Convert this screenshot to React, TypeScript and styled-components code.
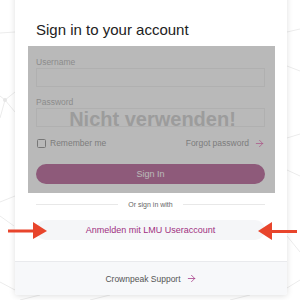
import React from 'react';
import styled, { createGlobalStyle } from 'styled-components';
import { ArrowRight } from 'lucide-react';

const GlobalStyle = createGlobalStyle`
	html, body {
		margin: 0;
		padding: 0;
		background: #ffffff;
	}
	body {
		font-family: 'Liberation Sans', Arial, Helvetica, sans-serif;
	}
`;

const Page = styled.div`
	position: relative;
	width: 300px;
	height: 300px;
	overflow: hidden;
	background: #ffffff;
`;

const Network = styled.svg`
	position: absolute;
	inset: 0;
	width: 300px;
	height: 300px;
`;

const Card = styled.div`
	position: relative;
	width: 272px;
	margin: -20px 0 0 15px;
	background: #ffffff;
	border-radius: 0 0 3px 3px;
	box-shadow: 0 1px 6px rgba(0, 0, 0, 0.13);
	display: flex;
	flex-direction: column;
`;

const Title = styled.h1`
	margin: 0;
	padding: 41px 0 0 21px;
	height: 25px;
	font-size: 15px;
	line-height: 18px;
	font-weight: 400;
	color: #222222;
`;

const Form = styled.div`
	position: relative;
	margin: 0 12px 0 13px;
	padding: 11px 10px 9px 8px;
	display: flex;
	flex-direction: column;
`;

const Label = styled.label`
	display: block;
	font-size: 8.5px;
	line-height: 11px;
	color: #999999;
`;

const Input = styled.div<{ gap?: number }>`
	height: 19px;
	box-sizing: border-box;
	border: 1px solid #ececec;
	margin-bottom: ${(p) => p.gap ?? 10}px;
`;

const OptionsRow = styled.div`
	display: flex;
	align-items: center;
	justify-content: space-between;
	height: 12px;
	margin-bottom: 15px;
	font-size: 8.5px;
	color: #777777;
`;

const Check = styled.span`
	display: inline-flex;
	align-items: center;
	gap: 4px;
	padding-left: 1px;
`;

const Box = styled.span`
	width: 7px;
	height: 7px;
	border: 1px solid #6d6d6d;
	border-radius: 1.5px;
`;

const Forgot = styled.span`
	display: inline-flex;
	align-items: center;
	gap: 5px;
	color: #777777;

	svg {
		color: #e0208f;
	}
`;

const SignInButton = styled.div`
	height: 20px;
	border-radius: 10px;
	background: #9f2e73;
	color: #ffffff;
	font-size: 9px;
	display: flex;
	align-items: center;
	justify-content: center;
`;

const Overlay = styled.div`
	position: absolute;
	inset: 0;
	background: rgba(128, 128, 128, 0.55);
	display: flex;
	align-items: center;
	justify-content: center;
	padding-left: 2px;
	font-size: 20px;
	font-weight: 700;
	color: #9c9c9c;
`;

const Divider = styled.div`
	display: flex;
	align-items: center;
	gap: 10px;
	margin: 6px 22px 0 21px;
	height: 10px;
	font-size: 7px;
	color: #666666;

	&::before,
	&::after {
		content: '';
		flex: 1;
		height: 1px;
		background: #e8e8e8;
	}
`;

const SsoButton = styled.div`
	margin: 11px 22px 21px 21px;
	height: 20px;
	border-radius: 10px;
	background: #f5f6f8;
	color: #a0307f;
	font-size: 9px;
	display: flex;
	align-items: center;
	justify-content: center;
`;

const Footer = styled.div`
	height: 33px;
	border-top: 1px solid #e9eaed;
	background: #f7f8fa;
	border-radius: 0 0 3px 3px;
	display: flex;
	align-items: center;
	justify-content: center;
	gap: 5px;
	font-size: 8.5px;
	color: #555555;

	svg {
		color: #a0307f;
	}
`;

const Pointer = styled.svg<{ left: number }>`
	position: absolute;
	left: ${(p) => p.left}px;
	top: 221px;
	width: 42px;
	height: 20px;
`;

const lines: [number, number, number, number][] = [
	[0, 33, 15, 32],
	[0, 96, 5, 100],
	[5, 100, 15, 92],
	[5, 100, 15, 112],
	[5, 100, 0, 118],
	[0, 202, 15, 196],
	[0, 216, 14, 226],
	[0, 282, 15, 290],
	[20, 300, 40, 295],
	[90, 300, 110, 295],
	[230, 300, 250, 295],
	[287, 32, 300, 29],
	[287, 66, 300, 71],
	[287, 138, 300, 134],
	[287, 170, 300, 176],
	[287, 236, 300, 252],
	[287, 288, 300, 280],
];

const App: React.FC = () => {
	return (
		<>
			<GlobalStyle />
			<Page>
				<Network viewBox='0 0 300 300'>
					{lines.map(([x1, y1, x2, y2], i) => (
						<line key={i} x1={x1} y1={y1} x2={x2} y2={y2} stroke='#ececec' strokeWidth={1} />
					))}
					<circle cx={5} cy={100} r={2} fill='#e6e6e6' />
				</Network>
				<Card>
					<Title>Sign in to your account</Title>
					<Form>
						<Label>Username</Label>
						<Input />
						<Label>Password</Label>
						<Input />
						<OptionsRow>
							<Check>
								<Box />
								Remember me
							</Check>
							<Forgot>
								Forgot password
								<ArrowRight size={11} strokeWidth={1.6} />
							</Forgot>
						</OptionsRow>
						<SignInButton>Sign In</SignInButton>
						<Overlay>Nicht verwenden!</Overlay>
					</Form>
					<Divider>Or sign in with</Divider>
					<SsoButton>Anmelden mit LMU Useraccount</SsoButton>
					<Footer>
						Crownpeak Support
						<ArrowRight size={11} strokeWidth={1.6} />
					</Footer>
				</Card>
				<Pointer left={7} viewBox='0 0 42 20'>
					<rect x={1} y={8.5} width={28} height={3} fill='#e8452c' />
					<polygon points='26,1 40,10 26,18' fill='#e8452c' />
				</Pointer>
				<Pointer left={256} viewBox='0 0 42 20'>
					<rect x={13} y={9} width={28} height={3} fill='#e8452c' />
					<polygon points='16,1 2,10 16,19' fill='#e8452c' />
				</Pointer>
			</Page>
		</>
	);
};

export default App;
